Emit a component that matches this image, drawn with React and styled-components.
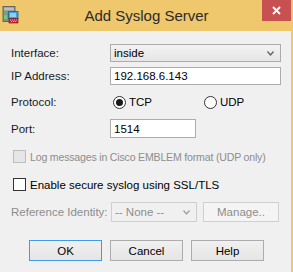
import styled, { createGlobalStyle } from "styled-components";

const Global = createGlobalStyle`
  html, body { margin: 0; padding: 0; background: #f0f0f0; }
  body { font-family: "Liberation Sans", Arial, sans-serif; font-size: 11.5px; color: #000; white-space: nowrap; }
`;

const Window = styled.div`
  width: 293px;
  height: 272px;
  background: #efc76c;
  display: flex;
  flex-direction: column;
  overflow: hidden;
`;

const TitleBar = styled.div`
  height: 31px;
  display: grid;
  grid-template-columns: 31px 1fr 31px;
  align-items: start;
`;

const AppIcon = styled.svg`
  margin: 6px 0 0 2px;
`;

const Title = styled.div`
  text-align: center;
  font-size: 15px;
  color: #2b2b2b;
  line-height: 15px;
  padding-top: 8px;
`;

const Close = styled.div`
  width: 29px;
  height: 21px;
  background: #c75050;
  display: flex;
  align-items: center;
  justify-content: center;
`;

const Body = styled.div`
  flex: 1;
  margin-right: 2px;
  background: #f0f0f0;
  display: flex;
  flex-direction: column;
  padding-left: 11px;
`;

const Row = styled.div`
  display: flex;
  align-items: center;
  height: ${(p) => p.$h}px;
  margin-top: ${(p) => p.$top}px;
`;

const Label = styled.div`
  width: ${(p) => p.$w || 99}px;
  flex-shrink: 0;
  color: ${(p) => (p.$disabled ? "#8d8d8d" : "#1a1a1a")};
`;

const Select = styled.div`
  width: ${(p) => p.$w}px;
  height: 100%;
  box-sizing: border-box;
  border: 1px solid ${(p) => (p.$disabled ? "#cfcfcf" : "#acacac")};
  background: ${(p) =>
    p.$disabled ? "#f0f0f0" : "linear-gradient(#f2f2f2, #e6e6e6)"};
  color: ${(p) => (p.$disabled ? "#8d8d8d" : "#000")};
  display: flex;
  align-items: center;
  justify-content: space-between;
  padding: 0 6px 0 3px;
`;

const Input = styled.div`
  width: ${(p) => p.$w}px;
  height: 100%;
  box-sizing: border-box;
  border: 1px solid #acacac;
  background: #fff;
  display: flex;
  align-items: center;
  padding-left: 3px;
`;

const Radio = styled.div`
  width: ${(p) => p.$w}px;
  display: flex;
  align-items: center;
  gap: 3px;
  padding-left: 3px;
  box-sizing: border-box;
`;

const RadioDot = styled.span`
  width: 11px;
  height: 11px;
  border: 1px solid #333;
  border-radius: 50%;
  background: #fff;
  display: flex;
  align-items: center;
  justify-content: center;
  &::after {
    content: "";
    width: 7px;
    height: 7px;
    border-radius: 50%;
    background: ${(p) => (p.$on ? "#1a1a1a" : "transparent")};
  }
`;

const Check = styled.label`
  display: flex;
  align-items: center;
  gap: 4px;
  padding-left: 2px;
  color: ${(p) => (p.$disabled ? "#8d8d8d" : "#000")};
`;

const CheckText = styled.span`
  font-size: ${(p) => (p.$tight ? "10.6px" : "inherit")};
  letter-spacing: ${(p) => (p.$tight ? "-0.2px" : "normal")};
`;

const Box = styled.span`
  width: 13px;
  height: 13px;
  flex-shrink: 0;
  box-sizing: border-box;
  border: 1px solid ${(p) => (p.$disabled ? "#bcbcbc" : "#333")};
  background: ${(p) => (p.$disabled ? "#e6e6e6" : "#fff")};
`;

const Button = styled.div`
  width: ${(p) => p.$w || 73}px;
  height: 100%;
  box-sizing: border-box;
  border: 1px solid ${(p) => (p.$default ? "#3c9bf0" : p.$disabled ? "#d0d0d0" : "#acacac")};
  background: ${(p) =>
    p.$disabled ? "#f4f4f4" : "linear-gradient(#f0f0f0, #e5e5e5)"};
  color: ${(p) => (p.$disabled ? "#8d8d8d" : "#000")};
  display: flex;
  align-items: center;
  justify-content: center;
  margin-left: ${(p) => p.$ml || 0}px;
`;

const Buttons = styled.div`
  display: flex;
  gap: 8px;
  height: 21px;
  margin-top: 18px;
  padding-left: 18px;
`;

const Chevron = ({ color }) => (
  <svg width="7" height="5" viewBox="0 0 7 5">
    <path d="M0.5 0.5 L3.5 4 L6.5 0.5" fill="none" stroke={color} strokeWidth="1.3" />
  </svg>
);

export default function App() {
  return (
    <>
      <Global />
      <Window>
        <TitleBar>
          <AppIcon width="17" height="18" viewBox="0 0 17 18">
            <rect x="1" y="0.5" width="12" height="15" fill="#8a8a8a" stroke="#555" strokeWidth="0.8" />
            <rect x="2" y="1.5" width="10" height="3" fill="#bdbdbd" />
            <rect x="2" y="5" width="3" height="3" fill="#5cb85c" />
            <rect x="2" y="9" width="3" height="4" fill="#6fcf6f" />
            <rect x="6.5" y="5.5" width="9.5" height="7" fill="#3ba6e6" stroke="#1e5f96" strokeWidth="0.8" />
            <rect x="8" y="7.5" width="6" height="1" fill="#e8f6ff" />
            <rect x="8" y="9.5" width="6" height="1" fill="#e8f6ff" />
            <rect x="7" y="12.5" width="9" height="4.5" fill="#d32a3a" stroke="#7a1018" strokeWidth="0.6" />
            <path d="M8 13.5h1v1h-1zM10 13.5h1v1h-1zM12 13.5h1v1h-1zM14 13.5h1v1h-1zM9 15h1v1h-1zM11 15h1v1h-1zM13 15h1v1h-1z" fill="#f4a0a8" />
          </AppIcon>
          <Title>Add Syslog Server</Title>
          <Close>
            <svg width="9" height="9" viewBox="0 0 9 9">
              <path d="M1 1 L8 8 M8 1 L1 8" stroke="#fff" strokeWidth="2" />
            </svg>
          </Close>
        </TitleBar>
        <Body>
          <Row $h={18} $top={13}>
            <Label>Interface:</Label>
            <Select $w={171}>
              <span>inside</span>
              <Chevron color="#606060" />
            </Select>
          </Row>
          <Row $h={18} $top={5}>
            <Label>IP Address:</Label>
            <Input $w={171}>192.168.6.143</Input>
          </Row>
          <Row $h={14} $top={10}>
            <Label>Protocol:</Label>
            <Radio $w={91}>
              <RadioDot $on />
              TCP
            </Radio>
            <Radio $w={80}>
              <RadioDot />
              UDP
            </Radio>
          </Row>
          <Row $h={19} $top={10}>
            <Label>Port:</Label>
            <Input $w={86}>1514</Input>
          </Row>
          <Row $h={13} $top={12}>
            <Check $disabled>
              <Box $disabled />
              <CheckText $tight>Log messages in Cisco EMBLEM format (UDP only)</CheckText>
            </Check>
          </Row>
          <Row $h={13} $top={15}>
            <Check>
              <Box />
              <CheckText>Enable secure syslog using SSL/TLS</CheckText>
            </Check>
          </Row>
          <Row $h={20} $top={11}>
            <Label $w={100} $disabled>Reference Identity:</Label>
            <Select $w={86} $disabled>
              <span>-- None --</span>
              <Chevron color="#a0a0a0" />
            </Select>
            <Button $w={76} $ml={6} $disabled>Manage..</Button>
          </Row>
          <Buttons>
            <Button $default>OK</Button>
            <Button>Cancel</Button>
            <Button>Help</Button>
          </Buttons>
        </Body>
      </Window>
    </>
  );
}
